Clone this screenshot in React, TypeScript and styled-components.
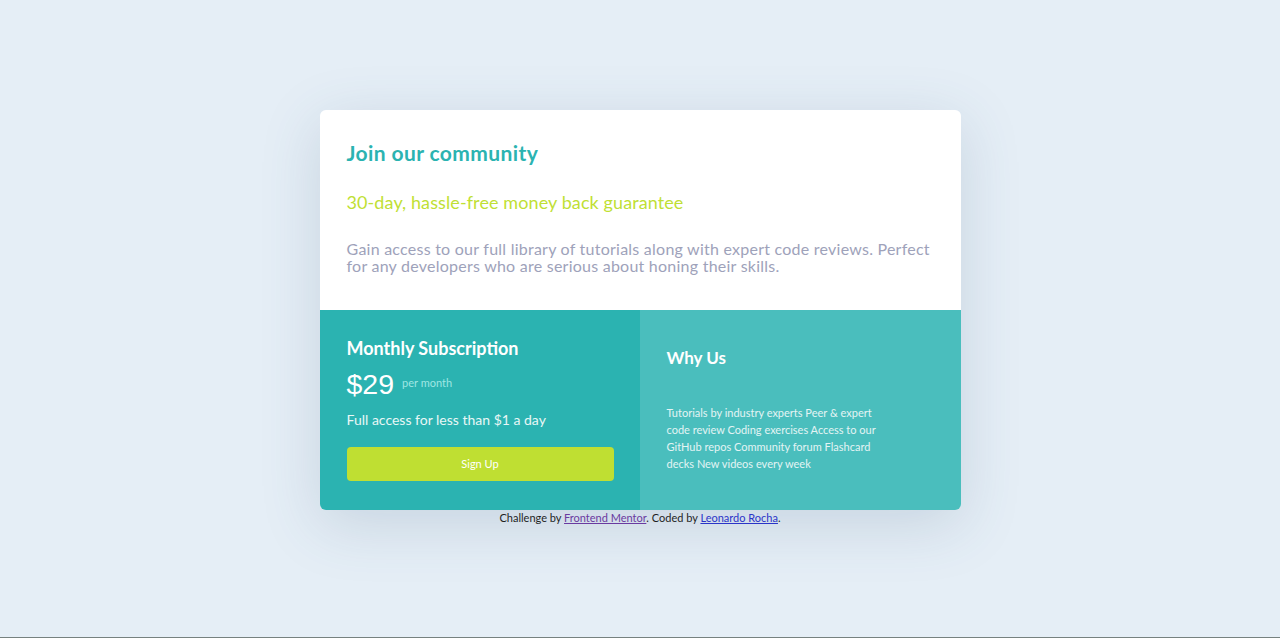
import React from "react";
import styled, { createGlobalStyle } from "styled-components";

const Global = createGlobalStyle`
  html, body { margin: 0; padding: 0; }
  body {
    background: #e5eef6;
    font-family: "Lato", "Noto Sans", sans-serif;
  }
  #root { min-height: 638px; }
`;

const Page = styled.main`
  box-sizing: border-box;
  height: 638px;
  border-bottom: 1px solid #76817f;
  display: flex;
  flex-direction: column;
  align-items: center;
  justify-content: center;
  padding-bottom: 3px;
`;

const Card = styled.section`
  width: 641px;
  border-radius: 6px;
  overflow: hidden;
  box-shadow: 0 14px 60px rgba(60, 95, 130, 0.18);
  display: grid;
  grid-template-columns: 320px 321px;
  grid-template-rows: 200px 200px;
`;

const Top = styled.div`
  grid-column: 1 / 3;
  background: #ffffff;
  padding: 31px 27px 0 27px;
  display: flex;
  flex-direction: column;
`;

const Title = styled.h1`
  margin: 0;
  font-size: 21px;
  font-weight: 700;
  letter-spacing: 0.4px;
  color: #2bb3b1;
  line-height: 24px;
`;

const Guarantee = styled.h2`
  margin: 26px 0 0;
  font-size: 18px;
  font-weight: 400;
  letter-spacing: 0.1px;
  color: #c0df34;
  line-height: 22px;
`;

const Intro = styled.p`
  margin: 27px 0 0;
  font-size: 16px;
  letter-spacing: 0.24px;
  line-height: 17px;
  color: #9ea2ba;
`;

const Half = styled.div<{ $bg: string }>`
  background: ${(p) => p.$bg};
  padding: 27px 27px 0 27px;
  display: flex;
  flex-direction: column;
  color: #ffffff;
`;

const SubTitle = styled.h3<{ $mt?: number; $size?: number }>`
  margin: ${(p) => p.$mt ?? 0}px 0 0;
  font-size: ${(p) => p.$size ?? 17}px;
  font-weight: 700;
  line-height: 22px;
`;

const PriceRow = styled.div`
  margin-top: 9px;
  display: flex;
  align-items: center;
  gap: 8px;
`;

const Price = styled.span`
  font-family: "Liberation Sans", Arial, sans-serif;
  font-size: 28.5px;
  line-height: 32px;
  color: #ffffff;
`;

const PerMonth = styled.span`
  font-size: 11px;
  color: #9fe6e3;
  margin-top: -3px;
`;

const Access = styled.p`
  margin: 11px 0 0;
  font-size: 14px;
  line-height: 18px;
  color: #e8f7f6;
`;

const Button = styled.button`
  margin-top: 18px;
  width: 267px;
  height: 34px;
  border: none;
  border-radius: 4px;
  background: #bfdf32;
  color: #ffffff;
  font-family: inherit;
  font-size: 11px;
  cursor: pointer;
`;

const Features = styled.p`
  margin: 35px 0 0;
  max-width: 215px;
  font-size: 11px;
  line-height: 17px;
  color: #e3f4f4;
`;

const Attribution = styled.p`
  margin: 1px 0 0;
  font-size: 11px;
  line-height: 14px;
  color: #1f1f1f;
  text-align: center;
  a:first-child { color: #6a3aa0; }
  a:last-child { color: #2b34c8; }
`;

export default function App() {
  return (
    <>
      <Global />
      <Page>
        <Card>
          <Top>
            <Title>Join our community</Title>
            <Guarantee>30-day, hassle-free money back guarantee</Guarantee>
            <Intro>
              Gain access to our full library of tutorials along with expert code reviews. Perfect
              for any developers who are serious about honing their skills.
            </Intro>
          </Top>
          <Half $bg="#2bb3b1">
            <SubTitle $size={18}>Monthly Subscription</SubTitle>
            <PriceRow>
              <Price>$29</Price>
              <PerMonth>per month</PerMonth>
            </PriceRow>
            <Access>Full access for less than $1 a day</Access>
            <Button>Sign Up</Button>
          </Half>
          <Half $bg="#4abebd">
            <SubTitle $mt={10}>Why Us</SubTitle>
            <Features>
              Tutorials by industry experts Peer &amp; expert code review Coding exercises Access to
              our GitHub repos Community forum Flashcard decks New videos every week
            </Features>
          </Half>
        </Card>
        <Attribution>
          Challenge by <a href="#">Frontend Mentor</a>. Coded by <a href="#">Leonardo Rocha</a>.
        </Attribution>
      </Page>
    </>
  );
}
